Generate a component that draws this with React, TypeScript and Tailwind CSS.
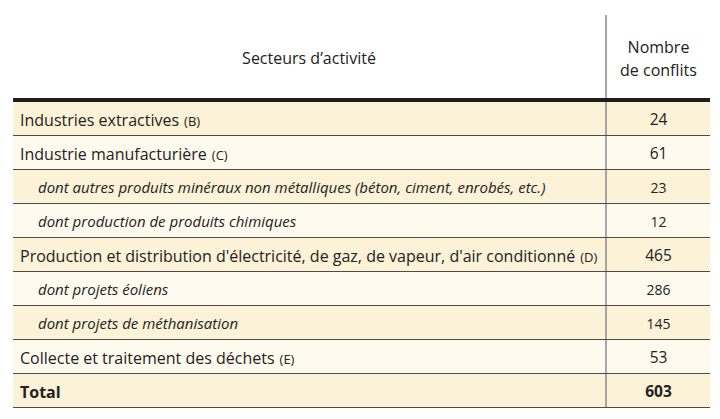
import React from "react";

type Row = { label: string; code?: string; value: string; sub?: boolean; total?: boolean };

const rows: Row[] = [
  { label: "Industries extractives", code: "(B)", value: "24" },
  { label: "Industrie manufacturière", code: "(C)", value: "61" },
  { label: "dont autres produits minéraux non métalliques (béton, ciment, enrobés, etc.)", value: "23", sub: true },
  { label: "dont production de produits chimiques", value: "12", sub: true },
  { label: "Production et distribution d'électricité, de gaz, de vapeur, d'air conditionné", code: "(D)", value: "465" },
  { label: "dont projets éoliens", value: "286", sub: true },
  { label: "dont projets de méthanisation", value: "145", sub: true },
  { label: "Collecte et traitement des déchets", code: "(E)", value: "53" },
  { label: "Total", value: "603", total: true },
];

export default function App() {
  return (
    <div className="w-[720px] h-[419px] bg-white pt-[15px] pl-[13px] text-[#222]" style={{ fontFamily: "'Open Sans', sans-serif" }}>
      <div className="w-[697px]">
        <div className="flex h-[87px] border-b-4 border-[#1e1e1e]">
          <div className="flex-1 flex items-center justify-center text-[16px] pt-[3px]">Secteurs d’activité</div>
          <div className="w-[105px] border-l-2 border-[#a6a6a6] flex flex-col items-center justify-center text-[16px] leading-[23px] pt-[4px]">
            <span>Nombre</span>
            <span>de conflits</span>
          </div>
        </div>
        {rows.map((r, i) => (
          <div
            key={i}
            className={`flex h-[34px] border-b border-[#4d4d4d] ${i % 2 === 0 ? "bg-[#fbf2d8]" : "bg-[#fffaee]"}`}
          >
            <div
              className={`flex-1 flex items-center pt-[2px] ${r.sub ? "pl-[25px] italic text-[15px]" : "pl-[7px] text-[16px]"} ${r.total ? "font-bold" : ""}`}
            >
              <span>
                {r.label}
                {r.code && <span className="text-[13px] ml-[5px]">{r.code}</span>}
              </span>
            </div>
            <div
              className={`w-[105px] border-l-2 border-[#a6a6a6] flex items-center justify-center pt-[2px] ${r.sub ? "text-[14px]" : "text-[15.5px]"} ${r.total ? "font-bold" : ""}`}
            >
              {r.value}
            </div>
          </div>
        ))}
      </div>
    </div>
  );
}
